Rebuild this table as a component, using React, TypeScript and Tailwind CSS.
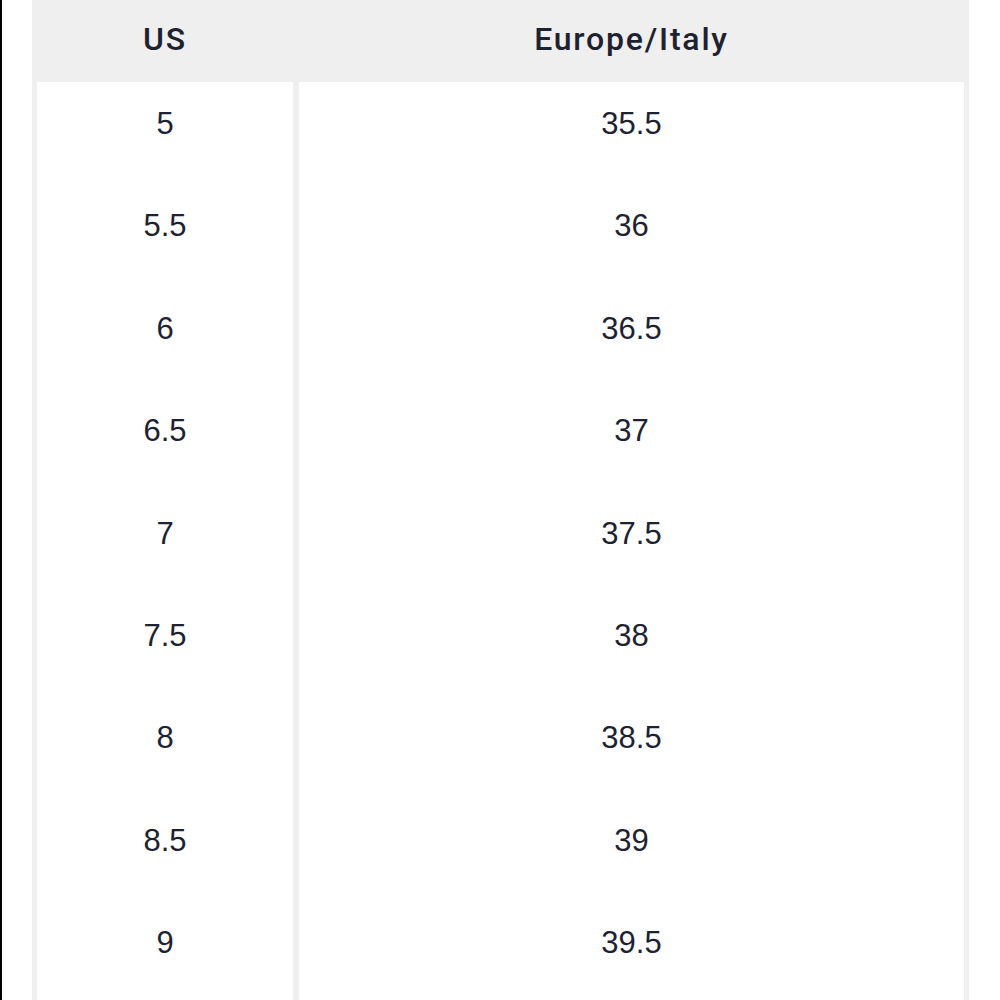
const rows = [
  ["5", "35.5"],
  ["5.5", "36"],
  ["6", "36.5"],
  ["6.5", "37"],
  ["7", "37.5"],
  ["7.5", "38"],
  ["8", "38.5"],
  ["8.5", "39"],
  ["9", "39.5"],
]

export default function App() {
  return (
    <div className="flex h-[1000px] w-[1000px] overflow-hidden bg-white font-['Liberation_Sans',Arial,sans-serif] text-[#1e2230]">
      {/* left edge rule */}
      <div className="h-full w-[2px] bg-black" />

      <div className="ml-[30px] h-full w-[937px] bg-[#efefef] px-[5px]">
        {/* header */}
        <div className="grid h-[82px] grid-cols-[256px_665px] gap-x-[6px] font-['Roboto',sans-serif] text-[32px] font-medium leading-[36px] tracking-[1.8px]">
          <div className="pt-[21px] text-center">US</div>
          <div className="pt-[21px] text-center">Europe/Italy</div>
        </div>

        {/* body */}
        <div className="grid grid-cols-[256px_665px] gap-x-[6px] text-[31px] leading-[36px]">
          {rows.map(([us, eu], i) => (
            <div key={i} className="contents">
              <div className="h-[102.4px] bg-white pt-[24px] text-center">{us}</div>
              <div className="h-[102.4px] bg-white pt-[24px] text-center">{eu}</div>
            </div>
          ))}
        </div>
      </div>
    </div>
  )
}
